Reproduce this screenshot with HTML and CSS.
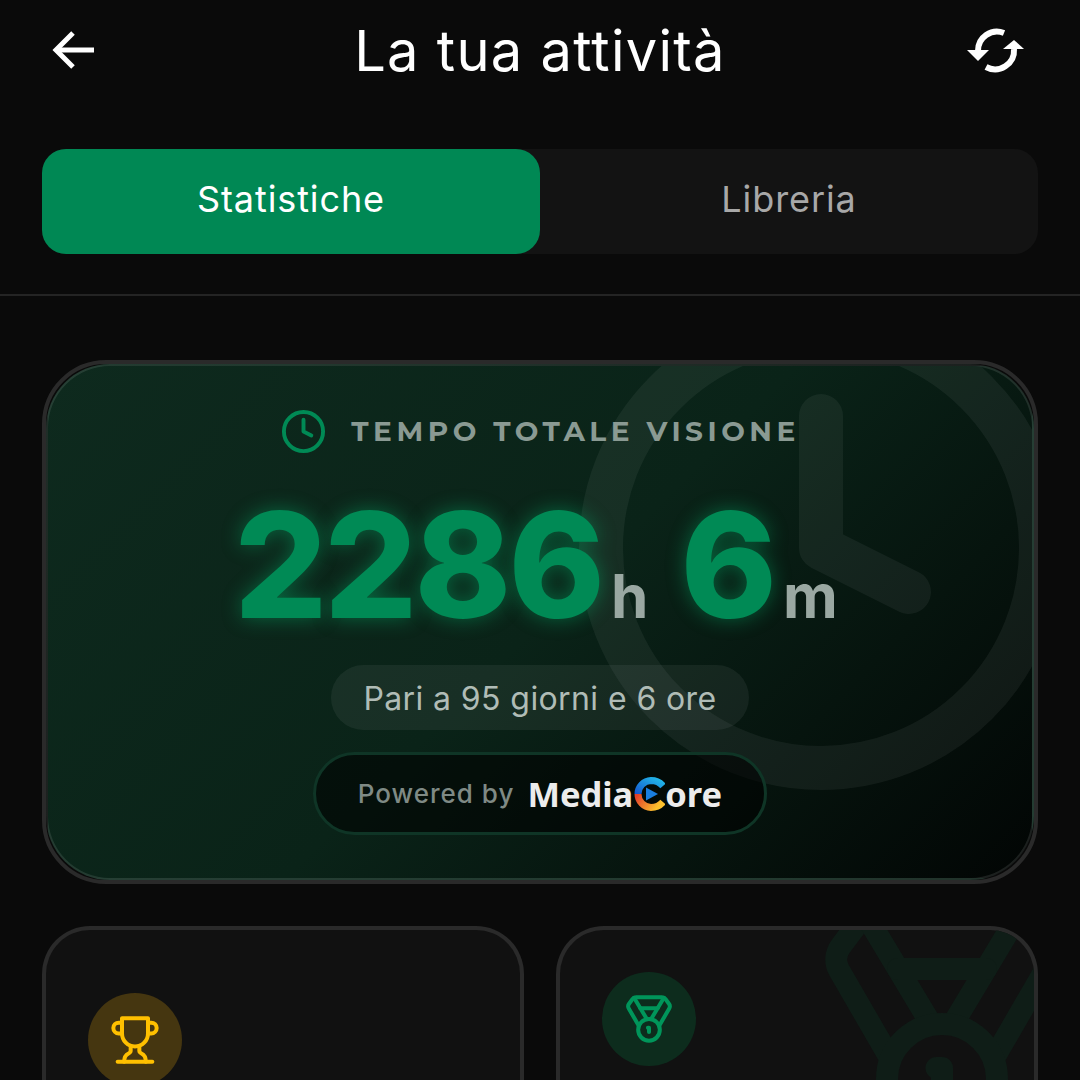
FILE: index.html
```html
<!DOCTYPE html>
<html lang="it">
<head>
    <meta charset="UTF-8">
    <meta name="viewport" content="width=device-width, initial-scale=1.0">
    <title>La tua attività</title>
    <link rel="stylesheet" href="styles.css">
</head>
<body>

<div class="header">
    <svg class="back-icon" viewBox="0 0 70 70"><path d="M17 34H54"/><path d="M33 17 16 34 33 51"/></svg>
    <h1 class="title">La tua attività</h1>
    <svg class="sync-icon" viewBox="0 0 75 70">
        <path class="sync-line" d="M44 17A19 19 0 0 0 18 35"/>
        <path class="sync-head" d="M7 34H29L18 45Z"/>
        <path class="sync-line" d="M54 33A19 19 0 0 1 26 51"/>
        <path class="sync-head" d="M43 33H64L54 24Z"/>
    </svg>
</div>

<div class="tabs">
    <div class="tab active">Statistiche</div>
    <div class="tab">Libreria</div>
</div>

<div class="divider"></div>

<div class="total-card">
    <div class="total-inner">
        <!-- big clock behind the numbers -->
        <svg class="ghost-clock" viewBox="0 0 24 24"><circle cx="12" cy="12" r="10"/><polyline points="12 6 12 12 16 14"/></svg>

        <div class="total-label">
            <svg class="label-icon" viewBox="0 0 24 24"><circle cx="12" cy="12" r="10"/><polyline points="12 6 12 12 16 14"/></svg>
            <span>TEMPO TOTALE VISIONE</span>
        </div>

        <div class="total-time">
            <span class="num">2286</span><span class="unit">h</span>
            <span class="num num-min">6</span><span class="unit">m</span>
        </div>

        <div class="days-pill">Pari a 95 giorni e 6 ore</div>

        <div class="powered">
            <span class="powered-by">Powered by</span>
            <span class="brand">Media<svg class="brand-c" viewBox="0 0 32 36">
                <defs>
                    <linearGradient id="cTop" x1="0" y1="1" x2="1" y2="0">
                        <stop offset="0" stop-color="#1459d0"/>
                        <stop offset="1" stop-color="#22b8e8"/>
                    </linearGradient>
                    <linearGradient id="cBottom" x1="0" y1="0" x2="1" y2="0.4">
                        <stop offset="0" stop-color="#e23f2a"/>
                        <stop offset="1" stop-color="#fbc02d"/>
                    </linearGradient>
                </defs>
                <path class="c-arc" stroke="url(#cBottom)" d="M5 18A13.5 13.5 0 0 0 18 31.5C23 31.5 27 29.500 30 26"/>
                <path class="c-arc" stroke="url(#cTop)" d="M5 18A13.5 13.5 0 0 1 18 4.500C23 4.500 27 6.500 30 10"/>
                <path class="c-play" d="M13 11.500 25 18 13 24.500Z"/>
            </svg>ore</span>
        </div>
    </div>
</div>

<div class="stat-grid">
    <div class="stat-card">
        <div class="stat-icon gold">
            <svg viewBox="0 0 24 24"><path d="M6 9H4.500a2.500 2.500 0 0 1 0-5H6"/><path d="M18 9h1.500a2.500 2.500 0 0 0 0-5H18"/><path d="M4 22h16"/><path d="M10 14.660V17c0 .55-.47.98-.97 1.210C7.850 18.750 7 20.240 7 22"/><path d="M14 14.660V17c0 .55.47.98.97 1.210C16.150 18.750 17 20.240 17 22"/><path d="M18 2H6v7a6 6 0 0 0 12 0V2Z"/></svg>
        </div>
    </div>
    <div class="stat-card medal-card">
        <svg class="ghost-medal" viewBox="0 0 24 24"><path d="M7.210 15 2.660 7.140a2 2 0 0 1 .13-2.200L4.400 2.800A2 2 0 0 1 6 2h12a2 2 0 0 1 1.600.8l1.600 2.140a2 2 0 0 1 .14 2.200L16.790 15"/><path d="M11 12 5.120 2.200"/><path d="m13 12 5.880-9.800"/><path d="M8 7h8"/><circle cx="12" cy="17" r="5"/><path d="M12 18v-2h-.5"/></svg>
        <div class="stat-icon green">
            <svg viewBox="0 0 24 24"><path d="M7.210 15 2.660 7.140a2 2 0 0 1 .13-2.200L4.400 2.800A2 2 0 0 1 6 2h12a2 2 0 0 1 1.600.8l1.600 2.140a2 2 0 0 1 .14 2.200L16.790 15"/><path d="M11 12 5.120 2.200"/><path d="m13 12 5.880-9.800"/><path d="M8 7h8"/><circle cx="12" cy="17" r="5"/><path d="M12 18v-2h-.5"/></svg>
        </div>
    </div>
</div>

</body>
</html>
```

FILE: styles.css
```css
html, body {
    height: 100%;
    overflow: hidden;
}
body {
    margin: 0;
    background-color: #0a0a0a;
    color: #fff;
    font-family: "Inter", "Liberation Sans", sans-serif;
}
svg {
    fill: none;
    stroke-linecap: round;
    stroke-linejoin: round;
}

/* Header */
.header {
    display: grid;
    grid-template-columns: 1fr auto 1fr;
    align-items: center;
    height: 100px;
    padding: 0 45px;
}
.title {
    margin: 0;
    font-size: 56px;
    font-weight: 400;
    letter-spacing: 1.25px;
    line-height: 102px;
}
.back-icon {
    width: 70px;
    height: 70px;
    margin-left: -5px;
    stroke: #fff;
    stroke-width: 5;
    stroke-linecap: butt;
    stroke-linejoin: miter;
}
.sync-icon {
    justify-self: end;
    width: 75px;
    height: 70px;
}
.sync-line {
    stroke: #fff;
    stroke-width: 6;
    stroke-linecap: butt;
}
.sync-head {
    fill: #fff;
}

/* Tabs */
.tabs {
    display: flex;
    height: 105px;
    margin: 49px 42px 0;
    background-color: #131313;
    border-radius: 24px;
}
.tab {
    flex: 1;
    display: flex;
    align-items: center;
    justify-content: center;
    padding-bottom: 6px;
    font-size: 36px;
    letter-spacing: 0.9px;
    color: #a8a8a8;
    border-radius: 24px;
}
.tab.active {
    background-color: #008854;
    color: #fff;
}
.divider {
    height: 2px;
    margin-top: 40px;
    background-color: #242424;
}

/* Total time card */
.total-card {
    height: 524px;
    box-sizing: border-box;
    margin: 64px 42px 0;
    border: 4px solid #2a2a2a;
    border-radius: 64px;
}
.total-inner {
    position: relative;
    overflow: hidden;
    display: flex;
    flex-direction: column;
    align-items: center;
    height: 100%;
    box-sizing: border-box;
    padding-top: 43px;
    border: 2px solid rgba(255, 255, 255, 0.1);
    border-radius: 64px;
    background: linear-gradient(135deg, #0e2a1e 0%, #0a2318 50%, #020504 100%);
}
.ghost-clock {
    position: absolute;
    left: 509px;
    top: -82px;
    width: 528px;
    height: 528px;
    stroke: rgba(255, 255, 255, 0.055);
    stroke-width: 2;
}
.total-label {
    position: relative;
    display: flex;
    align-items: center;
    gap: 24px;
    height: 44px;
    font-family: "Montserrat", "Inter", sans-serif;
    font-size: 28px;
    font-weight: 700;
    letter-spacing: 4.5px;
    color: #8a9a93;
}
.label-icon {
    width: 47px;
    height: 47px;
    stroke: #008a55;
    stroke-width: 2;
}
.total-time {
    position: relative;
    display: flex;
    align-items: baseline;
    margin: 20px 8px 0 0;
}
.num {
    font-size: 146px;
    font-weight: 800;
    letter-spacing: -3px;
    line-height: 184px;
    color: #008a55;
    text-shadow: 0 0 20px rgba(0, 200, 120, 0.4);
}
.num-min {
    margin-left: 32px;
}
.unit {
    margin-left: 9px;
    font-size: 60px;
    font-weight: 700;
    color: #9aa8a2;
}
.days-pill {
    position: relative;
    margin-top: 8px;
    padding: 0 32px;
    height: 65px;
    line-height: 67px;
    font-size: 32px;
    letter-spacing: 0.4px;
    color: #b0bcb6;
    background-color: rgba(255, 255, 255, 0.06);
    border-radius: 33px;
}
.powered {
    position: relative;
    display: flex;
    align-items: center;
    gap: 13px;
    box-sizing: border-box;
    height: 83px;
    margin-top: 22px;
    padding: 0 42px;
    border: 3px solid #0f3526;
    border-radius: 42px;
    background-color: rgba(0, 0, 0, 0.55);
}
.powered-by {
    font-size: 26px;
    font-weight: 500;
    letter-spacing: 1px;
    color: #7f8a85;
}
.brand {
    display: flex;
    align-items: center;
    font-family: "Noto Sans", sans-serif;
    font-size: 34.500px;
    font-weight: 700;
    color: #ececec;
}
.brand-c {
    width: 32px;
    height: 36px;
}
.c-arc {
    stroke-width: 7;
    stroke-linecap: butt;
}
.c-play {
    fill: #1a7ee0;
}

/* Lower cards */
.stat-grid {
    display: grid;
    grid-template-columns: 1fr 1fr;
    gap: 32px;
    margin: 42px 42px 0;
}
.stat-card {
    position: relative;
    overflow: hidden;
    box-sizing: border-box;
    height: 154px;
    padding: 63px 0 0 42px;
    border: 4px solid #2a2a2a;
    border-bottom: 0;
    border-radius: 48px 48px 0 0;
    background-color: #111;
}
.medal-card {
    padding-top: 42px;
}
.ghost-medal {
    position: absolute;
    right: -40px;
    top: -38px;
    width: 264px;
    height: 264px;
    stroke: #0f1d17;
    stroke-width: 2;
}
.stat-icon {
    position: relative;
    display: flex;
    align-items: center;
    justify-content: center;
    width: 94px;
    height: 94px;
    border-radius: 50%;
}
.stat-icon svg {
    width: 52px;
    height: 52px;
    stroke-width: 1.85;
}
.gold {
    background-color: #453610;
}
.gold svg {
    stroke: #ffc000;
}
.green {
    background-color: #0d2c1d;
}
.green svg {
    stroke: #00955a;
}
```
